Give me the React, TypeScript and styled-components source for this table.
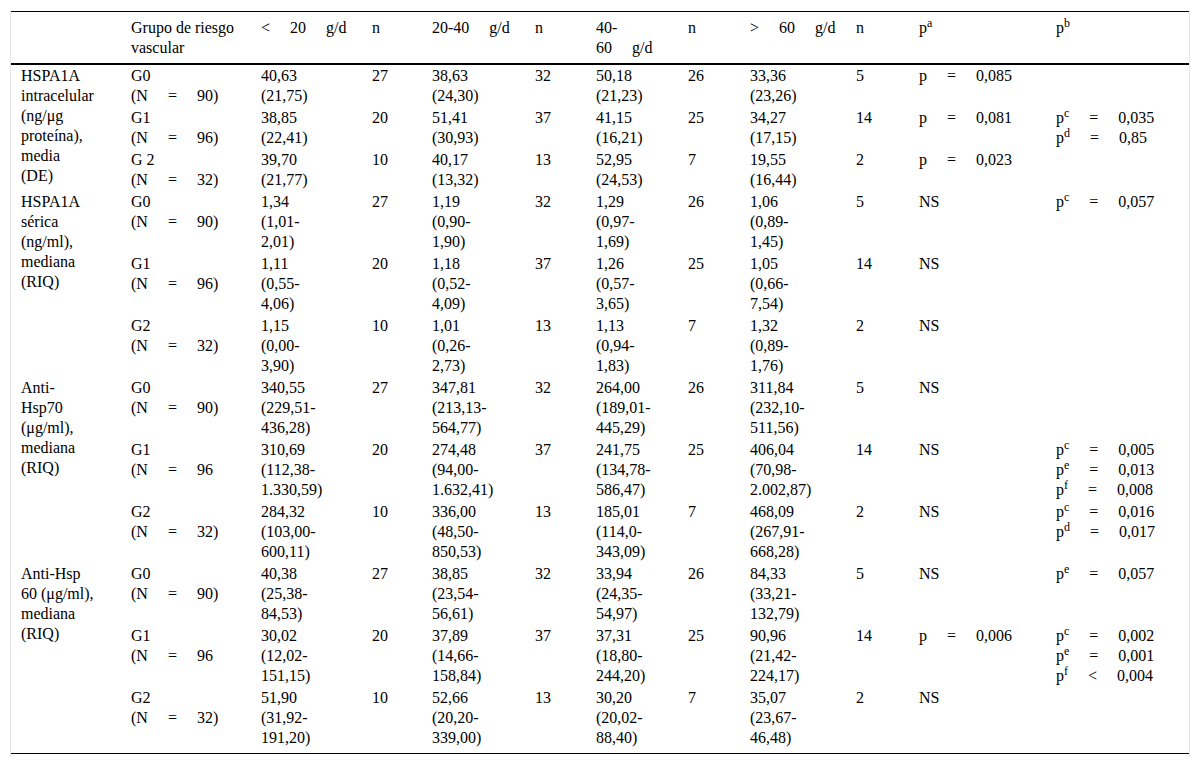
import React from "react";
import styled, { createGlobalStyle } from "styled-components";

const GlobalStyle = createGlobalStyle`
  html, body { margin: 0; padding: 0; background: #ffffff; }
`;

const Page = styled.div`
  padding: 10px 10px 0 10px;
`;

const Frame = styled.div`
  border-left: 1px solid #e6e6e6;
  border-right: 1px solid #e6e6e6;
  padding: 1px 0 3px 0;
`;

const Table = styled.table`
  width: 100%;
  border-collapse: collapse;
  table-layout: fixed;
  font-family: "Liberation Serif", "Times New Roman", serif;
  font-size: 16px;
  line-height: 20px;
  color: #000000;
`;

const Col = styled.col<{ $w: number }>`
  width: ${(p) => p.$w}px;
`;

const HeadRow = styled.tr`
  border-top: 1px solid #000000;
  border-bottom: 2px solid #000000;
`;

const Th = styled.th`
  text-align: left;
  font-weight: normal;
  vertical-align: top;
  padding: 6px 10px 5px 10px;
`;

const Body = styled.tbody`
  border-bottom: 1px solid #000000;
`;

const BodyRow = styled.tr`
  &:last-child > td {
    padding-bottom: 5px;
  }
`;

const Td = styled.td`
  text-align: left;
  vertical-align: top;
  padding: 1px 10px;
`;

const Spaced = styled.span`
  word-spacing: 16px;
  white-space: nowrap;
`;

const Sup = styled.sup`
  font-size: 12px;
  line-height: 0;
  vertical-align: 6px;
`;

const Line = styled.div`
  white-space: nowrap;
`;

type PB = [string, string, string];
type Row = {
  g: string;
  n: string;
  vals: [string[], string][];
  pa: string;
  pb: PB[];
};
type Group = { label: string[]; rows: Row[] };

const groups: Group[] = [
  {
    label: ["HSPA1A", "intracelular", "(ng/μg", "proteína),", "media", "(DE)"],
    rows: [
      {
        g: "G0",
        n: "(N = 90)",
        vals: [
          [["40,63", "(21,75)"], "27"],
          [["38,63", "(24,30)"], "32"],
          [["50,18", "(21,23)"], "26"],
          [["33,36", "(23,26)"], "5"],
        ],
        pa: "p = 0,085",
        pb: [],
      },
      {
        g: "G1",
        n: "(N = 96)",
        vals: [
          [["38,85", "(22,41)"], "20"],
          [["51,41", "(30,93)"], "37"],
          [["41,15", "(16,21)"], "25"],
          [["34,27", "(17,15)"], "14"],
        ],
        pa: "p = 0,081",
        pb: [
          ["c", "=", "0,035"],
          ["d", "=", "0,85"],
        ],
      },
      {
        g: "G 2",
        n: "(N = 32)",
        vals: [
          [["39,70", "(21,77)"], "10"],
          [["40,17", "(13,32)"], "13"],
          [["52,95", "(24,53)"], "7"],
          [["19,55", "(16,44)"], "2"],
        ],
        pa: "p = 0,023",
        pb: [],
      },
    ],
  },
  {
    label: ["HSPA1A", "sérica", "(ng/ml),", "mediana", "(RIQ)"],
    rows: [
      {
        g: "G0",
        n: "(N = 90)",
        vals: [
          [["1,34", "(1,01-", "2,01)"], "27"],
          [["1,19", "(0,90-", "1,90)"], "32"],
          [["1,29", "(0,97-", "1,69)"], "26"],
          [["1,06", "(0,89-", "1,45)"], "5"],
        ],
        pa: "NS",
        pb: [["c", "=", "0,057"]],
      },
      {
        g: "G1",
        n: "(N = 96)",
        vals: [
          [["1,11", "(0,55-", "4,06)"], "20"],
          [["1,18", "(0,52-", "4,09)"], "37"],
          [["1,26", "(0,57-", "3,65)"], "25"],
          [["1,05", "(0,66-", "7,54)"], "14"],
        ],
        pa: "NS",
        pb: [],
      },
      {
        g: "G2",
        n: "(N = 32)",
        vals: [
          [["1,15", "(0,00-", "3,90)"], "10"],
          [["1,01", "(0,26-", "2,73)"], "13"],
          [["1,13", "(0,94-", "1,83)"], "7"],
          [["1,32", "(0,89-", "1,76)"], "2"],
        ],
        pa: "NS",
        pb: [],
      },
    ],
  },
  {
    label: ["Anti-", "Hsp70", "(μg/ml),", "mediana", "(RIQ)"],
    rows: [
      {
        g: "G0",
        n: "(N = 90)",
        vals: [
          [["340,55", "(229,51-", "436,28)"], "27"],
          [["347,81", "(213,13-", "564,77)"], "32"],
          [["264,00", "(189,01-", "445,29)"], "26"],
          [["311,84", "(232,10-", "511,56)"], "5"],
        ],
        pa: "NS",
        pb: [],
      },
      {
        g: "G1",
        n: "(N = 96",
        vals: [
          [["310,69", "(112,38-", "1.330,59)"], "20"],
          [["274,48", "(94,00-", "1.632,41)"], "37"],
          [["241,75", "(134,78-", "586,47)"], "25"],
          [["406,04", "(70,98-", "2.002,87)"], "14"],
        ],
        pa: "NS",
        pb: [
          ["c", "=", "0,005"],
          ["e", "=", "0,013"],
          ["f", "=", "0,008"],
        ],
      },
      {
        g: "G2",
        n: "(N = 32)",
        vals: [
          [["284,32", "(103,00-", "600,11)"], "10"],
          [["336,00", "(48,50-", "850,53)"], "13"],
          [["185,01", "(114,0-", "343,09)"], "7"],
          [["468,09", "(267,91-", "668,28)"], "2"],
        ],
        pa: "NS",
        pb: [
          ["c", "=", "0,016"],
          ["d", "=", "0,017"],
        ],
      },
    ],
  },
  {
    label: ["Anti-Hsp", "60 (μg/ml),", "mediana", "(RIQ)"],
    rows: [
      {
        g: "G0",
        n: "(N = 90)",
        vals: [
          [["40,38", "(25,38-", "84,53)"], "27"],
          [["38,85", "(23,54-", "56,61)"], "32"],
          [["33,94", "(24,35-", "54,97)"], "26"],
          [["84,33", "(33,21-", "132,79)"], "5"],
        ],
        pa: "NS",
        pb: [["e", "=", "0,057"]],
      },
      {
        g: "G1",
        n: "(N = 96",
        vals: [
          [["30,02", "(12,02-", "151,15)"], "20"],
          [["37,89", "(14,66-", "158,84)"], "37"],
          [["37,31", "(18,80-", "244,20)"], "25"],
          [["90,96", "(21,42-", "224,17)"], "14"],
        ],
        pa: "p = 0,006",
        pb: [
          ["c", "=", "0,002"],
          ["e", "=", "0,001"],
          ["f", "<", "0,004"],
        ],
      },
      {
        g: "G2",
        n: "(N = 32)",
        vals: [
          [["51,90", "(31,92-", "191,20)"], "10"],
          [["52,66", "(20,20-", "339,00)"], "13"],
          [["30,20", "(20,02-", "88,40)"], "7"],
          [["35,07", "(23,67-", "46,48)"], "2"],
        ],
        pa: "NS",
        pb: [],
      },
    ],
  },
];

const widths = [110, 130, 111, 60, 103, 61, 92, 62, 106, 63, 137, 143];

const Lines: React.FC<{ items: string[] }> = ({ items }) => (
  <>
    {items.map((t, i) => (
      <Line key={i}>{t}</Line>
    ))}
  </>
);

export default function App() {
  return (
    <>
      <GlobalStyle />
      <Page>
        <Frame>
          <Table>
            <colgroup>
              {widths.map((w, i) => (
                <Col key={i} $w={w} />
              ))}
            </colgroup>
            <thead>
              <HeadRow>
                <Th />
                <Th>Grupo de riesgo vascular</Th>
                <Th>
                  <Spaced>{"< 20 g/d"}</Spaced>
                </Th>
                <Th>n</Th>
                <Th>
                  <Spaced>20-40 g/d</Spaced>
                </Th>
                <Th>n</Th>
                <Th>
                  <Line>40-</Line>
                  <Spaced>60 g/d</Spaced>
                </Th>
                <Th>n</Th>
                <Th>
                  <Spaced>{"> 60 g/d"}</Spaced>
                </Th>
                <Th>n</Th>
                <Th>
                  p<Sup>a</Sup>
                </Th>
                <Th>
                  p<Sup>b</Sup>
                </Th>
              </HeadRow>
            </thead>
            <Body>
              {groups.map((grp, gi) =>
                grp.rows.map((row, ri) => (
                  <BodyRow key={`${gi}-${ri}`}>
                    {ri === 0 && (
                      <Td rowSpan={grp.rows.length}>
                        <Lines items={grp.label} />
                      </Td>
                    )}
                    <Td>
                      <Line>{row.g}</Line>
                      <Line>
                        <Spaced>{row.n}</Spaced>
                      </Line>
                    </Td>
                    {row.vals.map(([v, n], vi) => (
                      <React.Fragment key={vi}>
                        <Td>
                          <Lines items={v} />
                        </Td>
                        <Td>{n}</Td>
                      </React.Fragment>
                    ))}
                    <Td>
                      <Spaced>{row.pa}</Spaced>
                    </Td>
                    <Td>
                      {row.pb.map(([s, op, val], pi) => (
                        <Line key={pi}>
                          <Spaced>
                            p<Sup>{s}</Sup> {op} {val}
                          </Spaced>
                        </Line>
                      ))}
                    </Td>
                  </BodyRow>
                ))
              )}
            </Body>
          </Table>
        </Frame>
      </Page>
    </>
  );
}
